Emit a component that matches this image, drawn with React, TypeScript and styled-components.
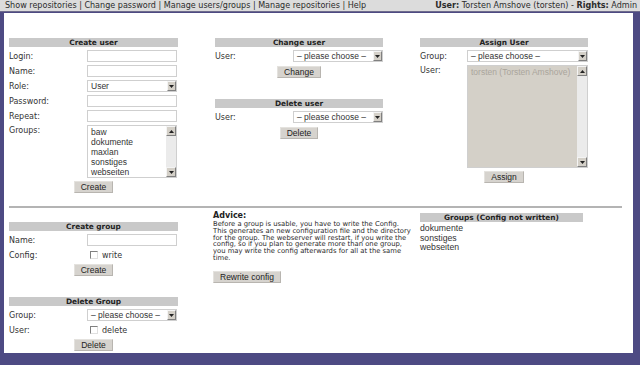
import styled, { createGlobalStyle } from 'styled-components';

// 전체 페이지 기본 스타일
const GlobalStyle = createGlobalStyle`
  *, *::before, *::after { box-sizing: border-box; }
  html, body { margin: 0; padding: 0; background: #4d4a83; }
  body {
    width: 640px;
    height: 365px;
    overflow: hidden;
    font-family: "DejaVu Sans", Verdana, sans-serif;
  }
`;

const TopBar = styled.div`
  height: 12px;
  background: #dcdcdc;
  border-bottom: 1px solid #6e6b8c;
  display: flex;
  justify-content: space-between;
  align-items: center;
  padding: 0 3px 0 5px;
  font-size: 8.05px;
  color: #2b2b2b;
  white-space: nowrap;
`;

const Frame = styled.div`
  padding: 1px 7px 0 4px;
`;

const Panel = styled.div`
  height: 340px;
  background: #fff;
  padding: 25px 0 0 5px;
`;

const TopGrid = styled.div`
  display: grid;
  grid-template-columns: 169px 168px 168px;
  column-gap: 37px;
  align-items: start;
  height: 168px;
`;

const Separator = styled.div`
  width: 613px;
  height: 2px;
  background: #b4b4b4;
`;

const LowerRow = styled.div`
  display: flex;
  align-items: flex-start;
`;

const Column = styled.div<{ $w: number; $top?: number }>`
  width: ${(p) => p.$w}px;
  flex: none;
  margin-top: ${(p) => p.$top ?? 0}px;
`;

const AdviceCol = styled.div`
  width: 201px;
  flex: none;
  margin: 3px 6px 0 35px;
`;

const Block = styled.div<{ $gap?: number }>`
  margin-top: ${(p) => p.$gap ?? 0}px;
`;

const Header = styled.div`
  height: 9px;
  background: #c9c9c9;
  font-size: 7.4px;
  font-weight: bold;
  line-height: 9px;
  text-align: center;
  color: #222;
`;

const Form = styled.div<{ $label: number }>`
  display: grid;
  grid-template-columns: ${(p) => p.$label}px 1fr;
  row-gap: 3px;
  margin-top: 3px;
  align-items: center;
`;

const Label = styled.div<{ $top?: boolean }>`
  font-size: 8px;
  color: #333;
  align-self: ${(p) => (p.$top ? 'start' : 'center')};
  padding-top: ${(p) => (p.$top ? 1 : 0)}px;
`;

const Input = styled.div`
  width: 90px;
  height: 12px;
  border: 1px solid #cfcfcf;
  background: #fff;
`;

const SelectBox = styled.div<{ $w: number }>`
  width: ${(p) => p.$w}px;
  height: 12px;
  border: 1px solid #cfcfcf;
  background: #fff;
  display: flex;
  align-items: center;
  justify-content: space-between;
  padding-left: 3px;
  font-family: "Liberation Sans", Arial, sans-serif;
  font-size: 8.5px;
  color: #333;
  white-space: nowrap;
`;

const ArrowBtn = styled.span`
  width: 9px;
  height: 10px;
  background: #d4d0c8;
  border: 1px solid;
  border-color: #f4f4f4 #808080 #808080 #f4f4f4;
  display: flex;
  align-items: center;
  justify-content: center;
  flex: none;
`;

const ListBox = styled.div<{ $w: number; $h: number; $disabled?: boolean }>`
  width: ${(p) => p.$w}px;
  height: ${(p) => p.$h}px;
  border: 1px solid #cfcfcf;
  background: ${(p) => (p.$disabled ? '#d4d0c8' : '#fff')};
  display: flex;
  font-family: "Liberation Sans", Arial, sans-serif;
  font-size: 8.5px;
  color: ${(p) => (p.$disabled ? '#aaa59c' : '#333')};
`;

const ListItems = styled.div`
  flex: 1;
  padding: 1px 3px;
  line-height: 10px;
  white-space: nowrap;
  overflow: hidden;
`;

const ScrollBar = styled.div`
  width: 10px;
  flex: none;
  background: #ebebeb;
  display: flex;
  flex-direction: column;
  justify-content: space-between;
`;

const ScrollBtn = styled.span`
  width: 10px;
  height: 10px;
  background: #d4d0c8;
  border: 1px solid;
  border-color: #f4f4f4 #808080 #808080 #f4f4f4;
  display: flex;
  align-items: center;
  justify-content: center;
`;

const CheckRow = styled.div`
  display: flex;
  align-items: center;
  gap: 4px;
  padding-left: 3px;
  height: 12px;
  font-size: 8px;
  color: #333;
`;

const CheckBox = styled.span`
  width: 8px;
  height: 8px;
  border: 1px solid;
  border-color: #808080 #e0e0e0 #e0e0e0 #808080;
  background: #fff;
`;

const ButtonRow = styled.div<{ $align?: string; $top?: number }>`
  display: flex;
  justify-content: ${(p) => p.$align ?? 'center'};
  margin-top: ${(p) => p.$top ?? 3}px;
`;

const Button = styled.button`
  height: 12px;
  padding: 0 6px;
  background: #d6d3ce;
  border: 1px solid;
  border-color: #e4e2de #b8b5b0 #b8b5b0 #e4e2de;
  font-family: "Liberation Sans", Arial, sans-serif;
  font-size: 8.5px;
  line-height: 10px;
  color: #222;
`;

const AdviceTitle = styled.div`
  font-size: 8px;
  font-weight: bold;
  color: #222;
`;

const AdviceText = styled.p`
  margin: 1px 0 0;
  font-size: 6.8px;
  line-height: 6.8px;
  color: #2a2a2a;
  white-space: nowrap;
`;

const PlainList = styled.div`
  margin-top: 2px;
  font-family: "Liberation Sans", Arial, sans-serif;
  font-size: 8.7px;
  line-height: 9.5px;
  color: #333;
`;

const Arrow = ({ dir }: { dir: 'up' | 'down' }) => (
  <svg width="5" height="3" viewBox="0 0 5 3">
    <path d={dir === 'down' ? 'M0 0H5L2.5 3Z' : 'M0 3H5L2.5 0Z'} fill="#222" />
  </svg>
);

const Select = ({ w, value }: { w: number; value: string }) => (
  <SelectBox $w={w}>
    <span>{value}</span>
    <ArrowBtn>
      <Arrow dir="down" />
    </ArrowBtn>
  </SelectBox>
);

const List = ({ w, h, items, disabled }: { w: number; h: number; items: string[]; disabled?: boolean }) => (
  <ListBox $w={w} $h={h} $disabled={disabled}>
    <ListItems>
      {items.map((i) => (
        <div key={i}>{i}</div>
      ))}
    </ListItems>
    <ScrollBar>
      <ScrollBtn>
        <Arrow dir="up" />
      </ScrollBtn>
      <ScrollBtn>
        <Arrow dir="down" />
      </ScrollBtn>
    </ScrollBar>
  </ListBox>
);

const CHOOSE = '– please choose –';
const groups = ['baw', 'dokumente', 'maxlan', 'sonstiges', 'webseiten'];
const notWritten = ['dokumente', 'sonstiges', 'webseiten'];
const advice = [
  'Before a group is usable, you have to write the Config.',
  'This generates an new configuration file and the directory',
  'for the group. The webserver will restart, if you write the',
  'config, so if you plan to generate more than one group,',
  'you may write the config afterwards for all at the same',
  'time.',
];

export default function App() {
  return (
    <>
      <GlobalStyle />
      <TopBar>
        <span>Show repositories | Change password | Manage users/groups | Manage repositories | Help</span>
        <span>
          <b>User:</b> Torsten Amshove (torsten) - <b>Rights:</b> Admin
        </span>
      </TopBar>
      <Frame>
        <Panel>
          <TopGrid>
            {/* 사용자 생성 */}
            <Block>
              <Header>Create user</Header>
              <Form $label={78}>
                <Label>Login:</Label>
                <Input />
                <Label>Name:</Label>
                <Input />
                <Label>Role:</Label>
                <Select w={90} value="User" />
                <Label>Password:</Label>
                <Input />
                <Label>Repeat:</Label>
                <Input />
                <Label $top>Groups:</Label>
                <List w={90} h={53} items={groups} />
              </Form>
              <ButtonRow>
                <Button>Create</Button>
              </ButtonRow>
            </Block>

            <div>
              <Block>
                <Header>Change user</Header>
                <Form $label={78}>
                  <Label>User:</Label>
                  <Select w={90} value={CHOOSE} />
                </Form>
                <ButtonRow $top={4}>
                  <Button>Change</Button>
                </ButtonRow>
              </Block>
              <Block $gap={21}>
                <Header>Delete user</Header>
                <Form $label={78}>
                  <Label>User:</Label>
                  <Select w={90} value={CHOOSE} />
                </Form>
                <ButtonRow $top={4}>
                  <Button>Delete</Button>
                </ButtonRow>
              </Block>
            </div>

            <Block>
              <Header>Assign User</Header>
              <Form $label={47}>
                <Label>Group:</Label>
                <Select w={121} value={CHOOSE} />
                <Label $top>User:</Label>
                <List w={121} h={103} items={['torsten (Torsten Amshove)']} disabled />
              </Form>
              <ButtonRow>
                <Button>Assign</Button>
              </ButtonRow>
            </Block>
          </TopGrid>

          <Separator />

          <LowerRow>
            <Column $w={169} $top={14}>
              <Block>
                <Header>Create group</Header>
                <Form $label={78}>
                  <Label>Name:</Label>
                  <Input />
                  <Label>Config:</Label>
                  <CheckRow>
                    <CheckBox />
                    write
                  </CheckRow>
                </Form>
                <ButtonRow>
                  <Button>Create</Button>
                </ButtonRow>
              </Block>
              <Block $gap={21}>
                <Header>Delete Group</Header>
                <Form $label={78}>
                  <Label>Group:</Label>
                  <Select w={90} value={CHOOSE} />
                  <Label>User:</Label>
                  <CheckRow>
                    <CheckBox />
                    delete
                  </CheckRow>
                </Form>
                <ButtonRow>
                  <Button>Delete</Button>
                </ButtonRow>
              </Block>
            </Column>

            <AdviceCol>
              <AdviceTitle>Advice:</AdviceTitle>
              <AdviceText>
                {advice.map((line, i) => (
                  <span key={i}>
                    {line}
                    <br />
                  </span>
                ))}
              </AdviceText>
              <ButtonRow $align="flex-start" $top={9}>
                <Button>Rewrite config</Button>
              </ButtonRow>
            </AdviceCol>

            <Column $w={163} $top={5}>
              <Header>Groups (Config not written)</Header>
              <PlainList>
                {notWritten.map((g) => (
                  <div key={g}>{g}</div>
                ))}
              </PlainList>
            </Column>
          </LowerRow>
        </Panel>
      </Frame>
    </>
  );
}
